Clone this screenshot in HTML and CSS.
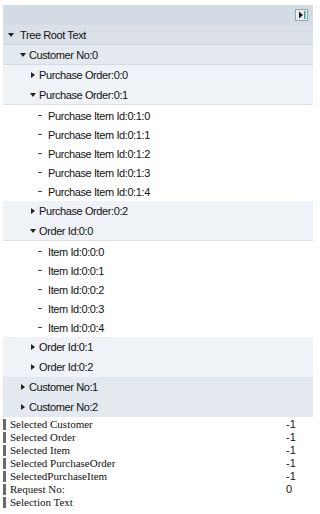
FILE: index.html
```html
<!DOCTYPE html>
<html>
<head>
<meta charset="utf-8">
<link rel="stylesheet" href="styles.css">
</head>
<body>
<div class="tree">
  <div class="header">
    <span class="hbtn"><svg width="13" height="12" viewBox="0 0 13 12"><rect x="0.5" y="0.5" width="12" height="11" fill="#e9edf2" stroke="#9aa3ad"/><path d="M4 2.5 L8 6 L4 9.5 Z" fill="#1a1a1a"/><rect x="9" y="2" width="1.5" height="8" fill="#3aa38f"/></svg></span>
  </div>
  <div class="row l0 exp"><span class="tw"><i class="down"></i></span>Tree Root Text</div>
  <div class="row l1 exp"><span class="tw"><i class="down"></i></span>Customer No:0</div>
  <div class="row l2"><span class="tw"><i class="right"></i></span>Purchase Order:0:0</div>
  <div class="row l2 exp"><span class="tw"><i class="down"></i></span>Purchase Order:0:1</div>
  <div class="row leaf"><span class="tw"><i class="dash"></i></span>Purchase Item Id:0:1:0</div>
  <div class="row leaf"><span class="tw"><i class="dash"></i></span>Purchase Item Id:0:1:1</div>
  <div class="row leaf"><span class="tw"><i class="dash"></i></span>Purchase Item Id:0:1:2</div>
  <div class="row leaf"><span class="tw"><i class="dash"></i></span>Purchase Item Id:0:1:3</div>
  <div class="row leaf"><span class="tw"><i class="dash"></i></span>Purchase Item Id:0:1:4</div>
  <div class="row l2"><span class="tw"><i class="right"></i></span>Purchase Order:0:2</div>
  <div class="row l2 exp"><span class="tw"><i class="down"></i></span>Order Id:0:0</div>
  <div class="row leaf"><span class="tw"><i class="dash"></i></span>Item Id:0:0:0</div>
  <div class="row leaf"><span class="tw"><i class="dash"></i></span>Item Id:0:0:1</div>
  <div class="row leaf"><span class="tw"><i class="dash"></i></span>Item Id:0:0:2</div>
  <div class="row leaf"><span class="tw"><i class="dash"></i></span>Item Id:0:0:3</div>
  <div class="row leaf"><span class="tw"><i class="dash"></i></span>Item Id:0:0:4</div>
  <div class="row l2"><span class="tw"><i class="right"></i></span>Order Id:0:1</div>
  <div class="row l2"><span class="tw"><i class="right"></i></span>Order Id:0:2</div>
  <div class="row l1"><span class="tw"><i class="right"></i></span>Customer No:1</div>
  <div class="row l1"><span class="tw"><i class="right"></i></span>Customer No:2</div>
</div>
<div class="info">
  <div class="lbl">Selected Customer</div><div class="val">-1</div>
  <div class="lbl">Selected Order</div><div class="val">-1</div>
  <div class="lbl">Selected Item</div><div class="val">-1</div>
  <div class="lbl">Selected PurchaseOrder</div><div class="val">-1</div>
  <div class="lbl">SelectedPurchaseItem</div><div class="val">-1</div>
  <div class="lbl">Request No:</div><div class="val">0</div>
  <div class="lbl">Selection Text</div><div class="val"></div>
</div>
</body>
</html>
```
FILE: styles.css
```css
html, body {
  margin: 0;
  padding: 0;
  background: #ffffff;
}
body {
  font-family: "Liberation Sans", Arial, sans-serif;
  font-size: 11px;
  color: #111;
}
.tree {
  margin: 5px 0 0 3px;
  width: 310px;
}
.header {
  height: 20px;
  background: #d3dbe4;
  display: flex;
  align-items: center;
  justify-content: flex-end;
  padding-right: 5px;
}
.hbtn {
  display: flex;
  width: 13px;
  height: 12px;
}
.row {
  display: flex;
  align-items: center;
  height: 19px;
  white-space: nowrap;
  letter-spacing: -0.4px;
}
.l0, .l1, .l2 {
  border-bottom: 1px solid transparent;
}
.l0 {
  background: #d9e0e8;
  padding-left: 6px;
  border-bottom-color: #cdd5df;
}
.l0 .tw {
  width: 11px;
}
.l1 {
  background: #e4e9ef;
  padding-left: 18px;
}
.l1.exp {
  border-bottom-color: #d3dae3;
}
.l2 {
  background: #eff2f6;
  padding-left: 28px;
}
.l2.exp {
  border-bottom-color: #dde2e9;
  margin-bottom: 1px;
}
.leaf {
  background: #ffffff;
  padding-left: 35px;
}
.tw {
  display: flex;
  align-items: center;
  width: 8px;
  height: 8px;
  flex: none;
}
.leaf .tw {
  width: 10px;
}
.down {
  margin-left: -1px;
  width: 0;
  height: 0;
  border-left: 3px solid transparent;
  border-right: 3px solid transparent;
  border-top: 4px solid #222;
}
.right {
  width: 0;
  height: 0;
  border-top: 3px solid transparent;
  border-bottom: 3px solid transparent;
  border-left: 4px solid #222;
}
.dash {
  width: 4px;
  height: 1px;
  background: #444;
}
.info {
  margin-top: 1px;
  display: grid;
  grid-template-columns: 286px auto;
  font-family: "Liberation Serif", "Times New Roman", serif;
  font-size: 11px;
  line-height: 13px;
  color: #111;
}
.lbl {
  display: flex;
  align-items: center;
  padding-left: 3px;
}
.lbl::before {
  content: "";
  width: 3px;
  height: 11px;
  background: #6a6a6a;
  margin-right: 4px;
}
.val {
  font-family: "Liberation Sans", Arial, sans-serif;
  font-size: 11px;
}
```
